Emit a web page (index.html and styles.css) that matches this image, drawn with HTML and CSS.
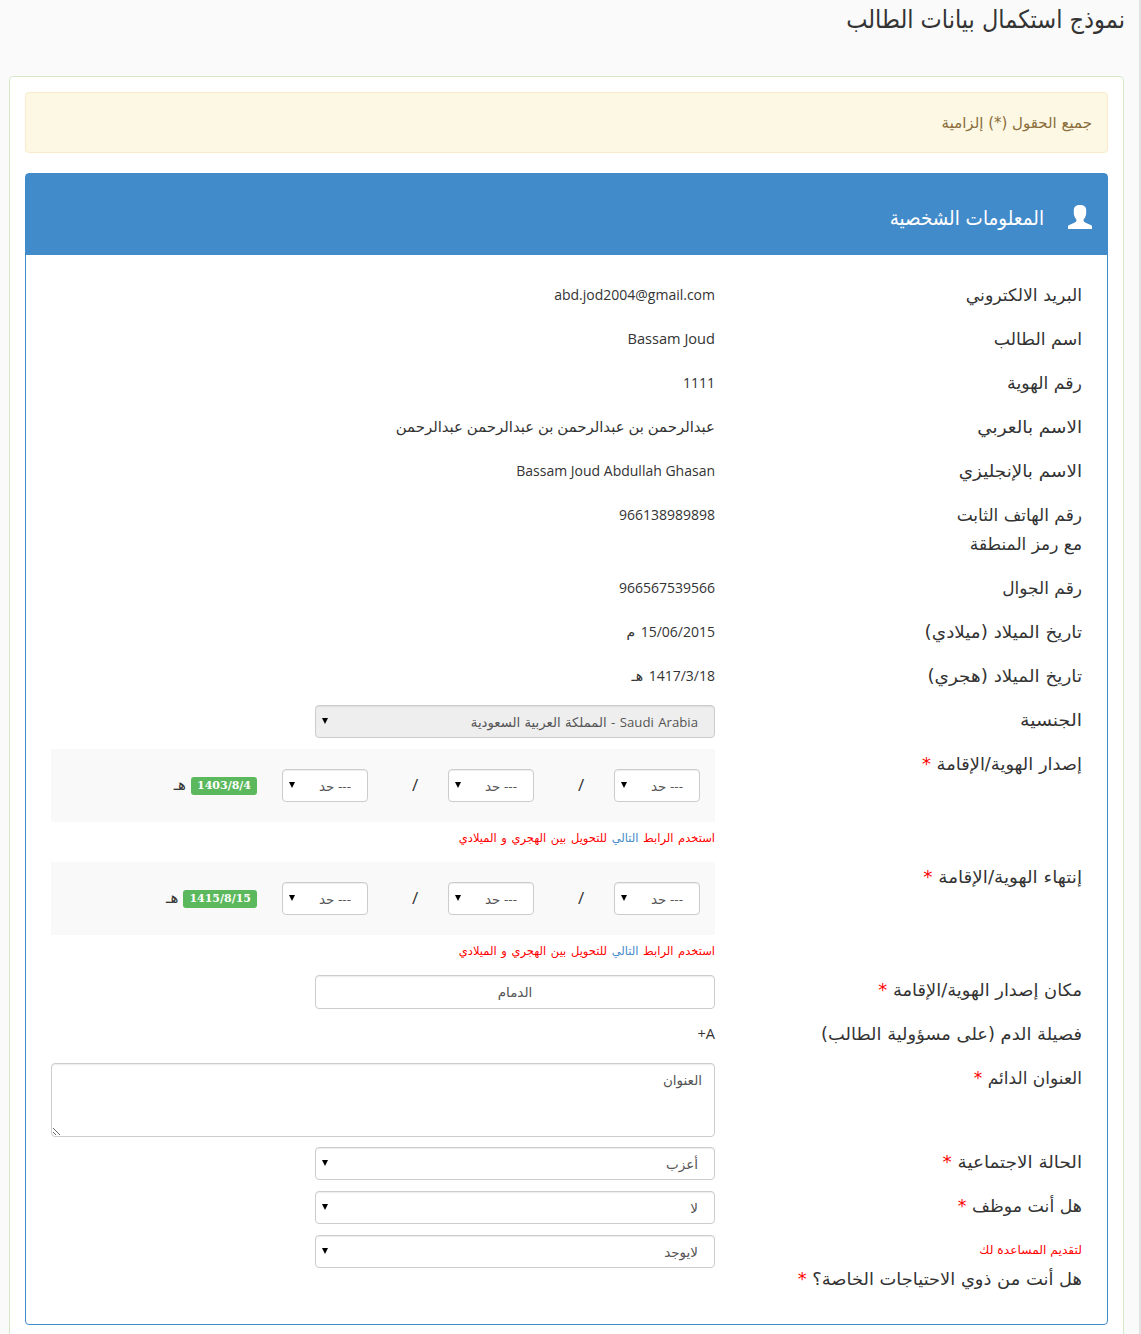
FILE: index.html
```html
<!DOCTYPE html>
<html lang="ar" dir="rtl">
<head>
<meta charset="utf-8">
<title>نموذج استكمال بيانات الطالب</title>
<link rel="stylesheet" href="styles.css">
</head>
<body>
<h1 class="page-title">نموذج استكمال بيانات الطالب</h1>
<main class="card">
  <div class="alert">جميع الحقول (*) إلزامية</div>
  <section class="panel">
    <header class="panel-head">
      <svg class="user" width="26" height="25" viewBox="0 0 26 25"><path fill="#fff" d="M1 25v-2.500c0-1 1-1.600 3.500-2.500 3.500-1.300 5-2 5-3.700 0-1-.9-1.600-1.500-2.800C7.200 12 6.800 10.500 6.800 8.500V6C7 2.500 9 1 13 1s6 1.500 6.200 5v2.500c0 2-.4 3.500-1.200 5-.6 1.200-1.500 1.800-1.500 2.800 0 1.700 1.500 2.400 5 3.700 2.500.9 3.500 1.500 3.500 2.500V25z"/></svg>
      <h2 class="panel-title">المعلومات الشخصية</h2>
    </header>
    <div class="panel-body">
      <div class="row"><div class="label wide-s">البريد الالكتروني</div><div class="value">abd.jod2004@gmail.com</div></div>
      <div class="row"><div class="label wide-s">اسم الطالب</div><div class="value name">Bassam Joud</div></div>
      <div class="row"><div class="label wide-s">رقم الهوية</div><div class="value">1111</div></div>
      <div class="row"><div class="label wide-l">الاسم بالعربي</div><div class="value arabic">عبدالرحمن بن عبدالرحمن بن عبدالرحمن عبدالرحمن</div></div>
      <div class="row"><div class="label wide-l">الاسم بالإنجليزي</div><div class="value">Bassam Joud Abdullah Ghasan</div></div>
      <div class="row"><div class="label">رقم الهاتف الثابت<br>مع رمز المنطقة</div><div class="value">966138989898</div></div>
      <div class="row"><div class="label">رقم الجوال</div><div class="value">966567539566</div></div>
      <div class="row"><div class="label wide-l">تاريخ الميلاد (ميلادي)</div><div class="value date">15/06/2015 م</div></div>
      <div class="row"><div class="label wide-l">تاريخ الميلاد (هجري)</div><div class="value date">1417/3/18 هـ</div></div>
      <div class="row"><div class="label wide-xl">الجنسية</div><div class="field"><div class="pick"><select class="control mixed" disabled><option>Saudi Arabia - المملكة العربية السعودية</option></select></div></div></div>
      <div class="row"><div class="label wide-m">إصدار الهوية/الإقامة <span class="req">*</span></div>
        <div class="field">
          <div class="dates">
            <div class="pick small"><select class="control"><option>--- حد</option></select></div><span class="slash">/</span>
            <div class="pick small"><select class="control"><option>--- حد</option></select></div><span class="slash">/</span>
            <div class="pick small"><select class="control"><option>--- حد</option></select></div>
            <span class="badge">1403/8/4</span><span class="era">هـ</span>
          </div>
          <p class="help">استخدم الرابط <a class="link">التالي</a> للتحويل بين الهجري و الميلادي</p>
        </div></div>
      <div class="row"><div class="label wide-l">إنتهاء الهوية/الإقامة <span class="req">*</span></div>
        <div class="field">
          <div class="dates">
            <div class="pick small"><select class="control"><option>--- حد</option></select></div><span class="slash">/</span>
            <div class="pick small"><select class="control"><option>--- حد</option></select></div><span class="slash">/</span>
            <div class="pick small"><select class="control"><option>--- حد</option></select></div>
            <span class="badge">1415/8/15</span><span class="era">هـ</span>
          </div>
          <p class="help">استخدم الرابط <a class="link">التالي</a> للتحويل بين الهجري و الميلادي</p>
        </div></div>
      <div class="row"><div class="label wide-m">مكان إصدار الهوية/الإقامة <span class="req">*</span></div><div class="field"><input class="control city" type="text" value="الدمام"></div></div>
      <div class="row"><div class="label wide-m">فصيلة الدم (على مسؤولية الطالب)</div><div class="value name">A+</div></div>
      <div class="row"><div class="label">العنوان الدائم <span class="req">*</span></div><div class="field"><textarea class="control address">العنوان</textarea></div></div>
      <div class="row"><div class="label wide-l">الحالة الاجتماعية <span class="req">*</span></div><div class="field"><div class="pick"><select class="control"><option>أعزب</option></select></div></div></div>
      <div class="row"><div class="label wide-s">هل أنت موظف <span class="req">*</span></div><div class="field"><div class="pick"><select class="control"><option>لا</option></select></div></div></div>
      <div class="row"><div class="label wide-m"><span class="note">لتقديم المساعدة لك</span>هل أنت من ذوي الاحتياجات الخاصة؟ <span class="req">*</span></div><div class="field"><div class="pick"><select class="control"><option>لايوجد</option></select></div></div></div>
    </div>
  </section>
</main>
</body>
</html>
```
FILE: styles.css
```css
* { box-sizing: border-box; }
html { height: 1334px; overflow: hidden; }
body {
  margin: 0;
  height: 1334px;
  overflow: hidden;
  padding: 0 15px 0 9px;
  border-right: 2px solid #e2e2e2;
  background: #fafafa;
  color: #333;
  font: 14px/29px "Open Sans", "DejaVu Sans", sans-serif;
}
.page-title {
  margin: 0 -1px 0 0;
  height: 76px;
  font: 400 25px/39px "DejaVu Sans Condensed", "DejaVu Sans", sans-serif;
}
.card {
  height: 1300px;
  padding: 15px;
  border: 1px solid #d6e9c6;
  border-radius: 4px;
  background: #fff;
}
.alert {
  height: 61px;
  margin-bottom: 20px;
  padding: 15px;
  border: 1px solid #faebcc;
  border-radius: 4px;
  background: #fcf8e3;
  color: #8a6d3b;
  font: 15px/30px "DejaVu Sans", sans-serif;
}
.panel {
  height: 1152px;
  border: 1px solid #428bca;
  border-radius: 4px;
}
.panel-head {
  display: flex;
  align-items: center;
  gap: 23px;
  height: 81px;
  padding: 4px 14px 0;
  background: #428bca;
  color: #fff;
}
.panel-title {
  margin: 0;
  padding-top: 3px;
  font: 400 20.400px/30px "DejaVu Sans Condensed", "DejaVu Sans", sans-serif;
}
.panel-body { padding: 25px; }
.row {
  display: grid;
  grid-template-columns: 367px 664px;
  margin-bottom: 10px;
}
.label {
  padding: 1px 0 4px;
  transform-origin: 100% 0;
  font: 400 17px/29px "DejaVu Sans", sans-serif;
}
.wide-s { transform: scaleX(1.02); }
.wide-m { transform: scaleX(1.05); }
.wide-l { transform: scaleX(1.08); }
.wide-xl { transform: scaleX(1.12); }
.arabic { font-size: 14.900px; }
.name { font-size: 14.600px; }
.date { word-spacing: 2px; }
.req { color: #f00; }
.note { display: block; color: #f00; font-size: 11.700px; }
.pick { position: relative; width: 400px; height: 33px; }
.pick::after {
  content: "";
  position: absolute;
  left: 7px;
  top: 13px;
  border: 3px solid transparent;
  border-top: 6px solid #000;
  border-bottom: 0;
}
.control {
  display: block;
  appearance: none;
  width: 100%;
  height: 33px;
  margin: 0;
  padding: 0 16px;
  border: 1px solid #ccc;
  border-radius: 4px;
  background: #fff;
  box-shadow: inset 0 1px 1px rgba(0, 0, 0, .075);
  color: #555;
  opacity: 1;
  font: 13.500px/20px "Open Sans", "DejaVu Sans", sans-serif;
}
.control:disabled { background: #eee; }
.mixed { padding-top: 1px; font-size: 13.200px; word-spacing: 1px; }
.city { width: 400px; height: 34px; text-align: center; }
.address { height: 74px; padding: 6px 12px; }
.dates {
  display: flex;
  align-items: center;
  height: 73px;
  padding: 0 15px;
  background: #f9f9f9;
}
.small { width: 86px; }
.slash { width: 66px; margin: 0 0 2px 14px; text-align: center; font-size: 17px; }
.badge {
  height: 18px;
  margin-right: 25px;
  padding: 0 6px;
  border-radius: 3px;
  background: #5cb85c;
  color: #fff;
  font: 700 11px/17px "DejaVu Serif", serif;
}
.era { margin: 0 5px 2px 0; font-size: 15px; }
.help {
  margin: 0;
  height: 30px;
  color: #f00;
  word-spacing: 1px;
  font: 11.500px/33px "DejaVu Sans", sans-serif;
}
.link { color: #428bca; }
```
